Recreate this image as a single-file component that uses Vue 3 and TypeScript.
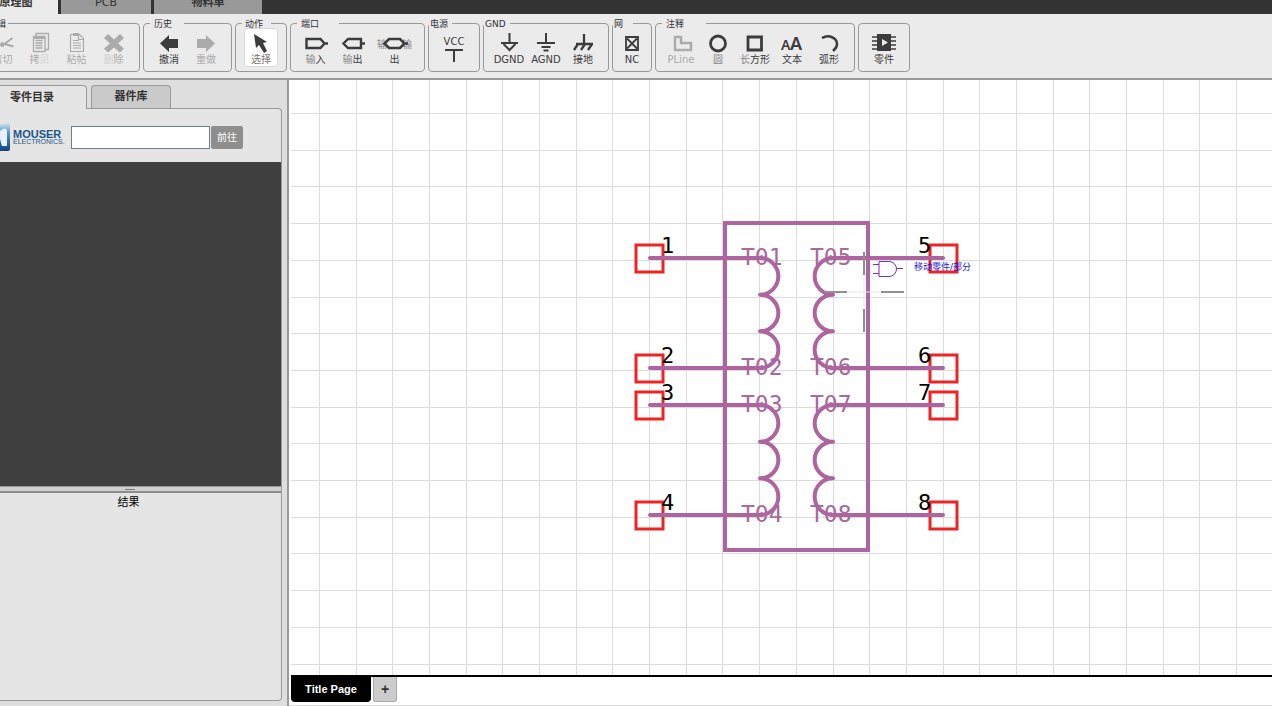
<script setup lang="ts">
import { ref } from 'vue'

interface Tool {
  id: string
  label: string
  soft?: string
  stroke?: string
  fill?: string
  width?: number
  disabled?: boolean
}
interface Group {
  id: string
  legend?: string
  tools: Tool[]
}

const groups: Group[] = [
  {
    id: 'edit',
    legend: '编辑',
    tools: [
      { id: 'cut', label: '剪切', disabled: true, width: 2, stroke: 'M11 14.500L22.500 6M11 11l12.500 3.500M9 12l5 2' },
      { id: 'copy', label: '拷', soft: '贝', disabled: true, width: 1.3, stroke: 'M9 4V1.500H21.500V17.500H18M8.500 8.500h7M8.500 11h7M8.500 13.500h7M8.500 16h7M6.500 4.500h11.500v15h-11.500z', fill: 'M6 4h12v3H6z' },
      { id: 'paste', label: '粘帖', disabled: true, width: 1.2, stroke: 'M6.500 2.500h9l4 4v13h-13zM9 8.500h6M9 11h8M9 13.500h8M9 16h8M14.500 3v4.500h4.500', fill: 'M9 1h6v3H9z' },
      { id: 'delete', label: '除', soft: '删', disabled: true, fill: 'M7 2l6 5.500L19 2l4 4-6 5.500 6 5-4 4-6-5-6 5-4-4 6-5L3 6z' },
    ],
  },
  {
    id: 'history',
    legend: '历史',
    tools: [
      { id: 'undo', label: '撤消', fill: 'M4 11.500L13 3v4h9v9h-9v4z' },
      { id: 'redo', label: '重做', disabled: true, fill: 'M22 11.500L13 3v4H4v9h9v4z' },
    ],
  },
  {
    id: 'action',
    legend: '动作',
    tools: [{ id: 'select', label: '选择', fill: 'M6 2l2 14 3-3 5 8 3-2-4-8 4-1z' }],
  },
  {
    id: 'port',
    legend: '端口',
    tools: [
      { id: 'input', label: '入', soft: '输', width: 2.4, stroke: 'M3.500 7h14l4 4.500-4 4.500h-14zM21.500 11.500H25' },
      { id: 'output', label: '出', soft: '输', width: 2.4, stroke: 'M21 7H8l-4.500 4.500L8 16h13zM21 11.500H25' },
      { id: 'inout', label: '出', width: 2.6, stroke: 'M7 7h11l4.500 4.500L18 16H7l-4.500-4.500zM22 11.500h4' },
    ],
  },
  {
    id: 'power',
    legend: '电源',
    tools: [{ id: 'vcc', label: 'VCC', stroke: 'M4 2h18M13 2v12' }],
  },
  {
    id: 'ground',
    legend: 'GND',
    tools: [
      { id: 'dgnd', label: 'DGND', stroke: 'M13.500 1v10M5 11h17M7.500 12l6 6 6-6' },
      { id: 'agnd', label: 'AGND', stroke: 'M13 1v10M4 11h18M8.500 15h9M10.500 18.500h5' },
      { id: 'chassis', label: '接地', width: 2.3, stroke: 'M14 2v10M6 12h17M8 12l-4 6M15 12l-4 6M22 12l-4 6' },
    ],
  },
  {
    id: 'net',
    legend: '网',
    tools: [{ id: 'nc', label: 'NC', width: 1.8, stroke: 'M7 5h12v13h-12zM8 6.500l10 10M18 6.500l-10 10' }],
  },
  {
    id: 'note',
    legend: '注释',
    tools: [
      { id: 'pline', label: 'PLine', disabled: true, width: 2.5, stroke: 'M7 5h6v6h10v7H7z' },
      { id: 'circle', label: '', soft: '圆', width: 2.8, stroke: 'M13 4a7.500 7.500 0 1 1 0 15a7.500 7.500 0 1 1 0-15z' },
      { id: 'rect', label: '方形', soft: '长', width: 2.8, stroke: 'M6 5h13.500v13H6z' },
      { id: 'text', label: '文本' },
      { id: 'arc', label: '弧形', width: 2.5, stroke: 'M6 6c7-4 15 0 15 6 0 3-1 4-4 7' },
    ],
  },
  {
    id: 'part',
    tools: [
      { id: 'part', label: '零件', width: 1.5, stroke: 'M1 5h5M1 9h5M1 13h5M1 17h5M20 5h5M20 9h5M20 13h5M20 17h5', fill: 'M6 2h14v17H6zM11 7v7l6-3.500z' },
    ],
  },
]

const gridX = Array.from({ length: 90 }, (_, i) => Math.round(28 + i * 36.68))
const gridY = Array.from({ length: 60 }, (_, i) => Math.round(33 + i * 36.7))

const rows = [178, 288, 325, 435]
const coils = [178, 325]
const bumps = (top: number, x: number, sweep: number) =>
  `M${x} ${top}` + [1, 2, 3].map((n) => `A18.300 18.300 0 0 ${sweep} ${x} ${top + (n * 110) / 3}`).join('')

const query = ref('')
</script>

<template>
  <div class="app">
    <nav class="modes">
      <button class="mode current">原理图</button>
      <button class="mode pcb">PCB</button>
      <button class="mode bom">物料单</button>
    </nav>

    <header class="toolbar">
      <fieldset v-for="g in groups" :key="g.id" class="group" :class="[g.id, { bare: !g.legend }]">
        <legend v-if="g.legend">{{ g.legend }}</legend>
        <div class="tools">
          <button v-for="t in g.tools" :key="t.id" class="tool" :class="t.id" :disabled="t.disabled">
            <span v-if="t.id === 'inout'" class="behind"><i>输</i><i>输</i></span>
            <svg class="icon" viewBox="0 0 26 22" aria-hidden="true">
              <path v-if="t.fill" :d="t.fill" fill="currentColor" fill-rule="evenodd" />
              <path v-if="t.stroke" :d="t.stroke" fill="none" stroke="currentColor" :stroke-width="t.width ?? 2" />
              <template v-if="t.id === 'text'">
                <text class="glyph small" x="2" y="18">A</text>
                <text class="glyph large" x="11" y="18">A</text>
              </template>
            </svg>
            <span class="label">
              <span v-if="t.soft && t.id !== 'copy'" class="soft">{{ t.soft }}</span>{{ t.label }}<span v-if="t.id === 'copy'" class="soft">{{ t.soft }}</span>
            </span>
          </button>
        </div>
      </fieldset>
    </header>

    <div class="body">
      <aside class="sidebar">
        <div class="tabs">
          <button class="tab active">零件目录</button>
          <button class="tab">器件库</button>
        </div>
        <div class="panel">
          <form class="search" @submit.prevent>
            <svg class="logo" viewBox="0 0 68 32" role="img" aria-label="Mouser Electronics">
              <defs>
                <linearGradient id="badge" x1="0" y1="0" x2="0" y2="1">
                  <stop offset="0" stop-color="#dfeaf2" />
                  <stop offset="0.400" stop-color="#4a93c4" />
                  <stop offset="1" stop-color="#0d4580" />
                </linearGradient>
              </defs>
              <path d="M0 3L10 0V27q0 2-2 2H0z" fill="url(#badge)" />
              <path d="M0 9L3 7Q7 5 7 10V24H2L0 17z" fill="#e6f2fa" />
              <text x="13" y="16" class="brand">MOUSER</text>
              <text x="13" y="22" class="sub">ELECTRONICS.</text>
            </svg>
            <input v-model="query" type="text" aria-label="搜索零件" />
            <button class="go">前往</button>
          </form>
          <div class="catalog"></div>
          <div class="splitter"><span></span></div>
          <div class="results">结果</div>
        </div>
      </aside>

      <main class="sheet">
        <svg class="canvas">
          <g class="grid">
            <line v-for="x in gridX" :key="'x' + x" :x1="x" y1="0" :x2="x" y2="100%" />
            <line v-for="y in gridY" :key="'y' + y" x1="0" :y1="y" x2="100%" :y2="y" />
          </g>
          <g v-for="(y, i) in rows" :key="y">
            <rect class="pin" x="345" :y="y - 13" width="27" height="27" />
            <rect class="pin" x="639" :y="y - 13" width="27" height="27" />
            <text class="num" x="370" :y="y - 5">{{ i + 1 }}</text>
            <text class="num" x="627" :y="y - 5">{{ i + 5 }}</text>
            <text class="name" x="450" :y="y + 7">T0{{ i + 1 }}</text>
            <text class="name" x="519" :y="y + 7">T0{{ i + 5 }}</text>
            <path class="wire" :d="`M359 ${y}H469M652 ${y}H541`" />
          </g>
          <rect class="outline" x="434" y="143" width="143" height="327" />
          <g v-for="y in coils" :key="'c' + y">
            <path class="wire" :d="bumps(y, 469, 1)" />
            <path class="wire" :d="bumps(y, 542, 0)" />
          </g>
          <path class="cross" d="M533 212h23M590 212h23M573 172v23M573 229v23" />
          <path class="gap" d="M557 212h32M573 196v32" />
          <path class="gate" d="M588 181.500h10a7 7 0 0 1 0 15h-10zM582 184.500h6M582 193.500h6M605 188.500h7" />
          <text class="hint" x="623" y="190">移动零件/部分</text>
        </svg>
        <footer class="pages">
          <button class="page">Title Page</button>
          <button class="add" aria-label="Add page">+</button>
        </footer>
      </main>
    </div>
  </div>
</template>

<style>
body {
  margin: 0;
}
</style>

<style scoped>
.app {
  display: flex;
  flex-direction: column;
  height: 100vh;
  overflow: hidden;
  background: #ebebeb;
  color: #333;
  font: 10px/12px 'DejaVu Sans', 'Noto Sans CJK SC', sans-serif;
}
.app * {
  box-sizing: border-box;
}
button,
input {
  font: inherit;
  color: inherit;
  border: 0;
  padding: 0;
  margin: 0;
  background: none;
}

/* Mode switcher */
.modes {
  display: flex;
  gap: 3px;
  flex: none;
  height: 14px;
  background: #333;
}
.mode {
  display: flex;
  align-items: flex-end;
  justify-content: center;
  overflow: hidden;
  height: 14px;
  background: #999;
  color: #333;
  font-size: 11px;
  line-height: 22px;
  font-weight: bold;
}
.mode.current {
  width: 84px;
  margin-left: -26px;
  background: #ebebeb;
}
.mode.pcb {
  width: 90px;
  font-weight: normal;
}
.mode.bom {
  width: 108px;
}

/* Toolbar */
.toolbar {
  display: flex;
  align-items: flex-start;
  gap: 3px;
  flex: none;
  height: 66px;
  padding-top: 4px;
  border-bottom: 2px solid #999;
}
.group {
  flex: none;
  min-width: 0;
  width: 52px;
  height: 54px;
  margin: 0;
  padding: 0;
  border: 1px solid #999;
  border-radius: 4px;
}
.group.bare {
  height: 49px;
  margin-top: 5px;
  padding-top: 4px;
}
.group.edit {
  width: 160px;
  margin-left: -20px;
}
.group.history {
  width: 89px;
}
.group.port {
  width: 135px;
}
.group.ground {
  width: 126px;
}
.group.net {
  width: 40px;
}
.group.note {
  width: 200px;
}
legend {
  height: 10px;
  margin-left: 6px;
  padding: 0 12px 0 4px;
  font-size: 9px;
  line-height: 12px;
}
.edit legend {
  margin-left: 7px;
  padding: 0 2px 0 0;
}
.action legend,
.port legend {
  padding: 0 8px 0 3px;
}
.port legend {
  padding-right: 20px;
  padding-left: 4px;
}
.power legend,
.ground legend,
.net legend {
  margin-left: 0;
  padding: 0 4px 0 1px;
}
.net legend {
  padding-right: 10px;
}
.note legend {
  padding-right: 22px;
}
.tools {
  display: flex;
  justify-content: center;
}
.edit .tools {
  justify-content: flex-end;
  padding-right: 7px;
}
.tool {
  position: relative;
  display: flex;
  flex: none;
  flex-direction: column;
  align-items: center;
  width: 37px;
  height: 39px;
  padding-top: 4px;
  color: #3c3c3c;
  white-space: nowrap;
}
.tool:disabled {
  color: #ababab;
}
.tool.select {
  width: 34px;
  border: 1px solid #d8d8d8;
  border-radius: 3px;
  padding-top: 3px;
  background: #fff;
}
.tool.select .label {
  color: #777;
}
.tool.inout {
  width: 47px;
}
.tool.vcc {
  padding-top: 8px;
}
.tool.vcc .label {
  order: -1;
}
.icon {
  position: relative;
  flex: none;
  width: 26px;
  height: 22px;
}
.glyph {
  fill: currentColor;
  font-family: 'Noto Sans', sans-serif;
  font-weight: 600;
}
.small {
  font-size: 14px;
}
.large {
  font-size: 18px;
}
.behind {
  position: absolute;
  top: 11px;
  left: 6px;
  right: 6px;
  display: flex;
  justify-content: space-between;
  color: #888;
}
.behind i {
  font-style: normal;
}
.soft {
  color: #888;
}
.tool:disabled .soft {
  color: #d0d0d0;
}

/* Sidebar */
.body {
  display: flex;
  flex: 1;
  min-height: 0;
}
.sidebar {
  display: flex;
  flex-direction: column;
  flex: none;
  width: 289px;
  padding: 5px 5px 5px 0;
  border-right: 2px solid #999;
  background: #dedede;
}
.tabs {
  display: flex;
  gap: 4px;
  height: 23px;
}
.tab {
  width: 80px;
  height: 23px;
  border: 1px solid #999;
  border-bottom: 0;
  border-radius: 4px 4px 0 0;
  background: #cacaca;
  font-size: 11px;
  font-weight: bold;
}
.tab.active {
  position: relative;
  width: 110px;
  height: 24px;
  margin-left: -23px;
  background: #e5e5e5;
}
.panel {
  display: flex;
  flex: 1;
  flex-direction: column;
  min-height: 0;
  border: 1px solid #999;
  border-left: 0;
  border-radius: 0 4px 4px 0;
  background: #e5e5e5;
}
.search {
  display: flex;
  align-items: center;
  flex: none;
  height: 53px;
  padding-top: 4px;
}
.logo {
  width: 68px;
  height: 32px;
  margin-right: 3px;
}
.brand,
.sub {
  font-family: 'Liberation Sans', sans-serif;
  font-weight: bold;
  fill: #1d5789;
}
.brand {
  font-size: 11px;
}
.sub {
  font-size: 7px;
  font-weight: normal;
}
.search input {
  width: 139px;
  height: 23px;
  padding: 0 4px;
  border: 1px solid #6d7f8f;
  background: #fff;
}
.go {
  width: 32px;
  height: 23px;
  margin-left: 1px;
  border-radius: 2px;
  background: #8e8e8e;
  color: #fff;
}
.catalog {
  flex: 328;
  background: #404040;
}
.splitter {
  display: flex;
  align-items: center;
  justify-content: center;
  flex: none;
  height: 7px;
  padding-right: 22px;
  border-top: 1px solid #999;
  border-bottom: 2px solid #8c8c8c;
  background: #d0d0d0;
}
.splitter span {
  width: 10px;
  height: 1px;
  background: #777;
}
.results {
  flex: 205;
  padding: 4px 24px 0 0;
  color: #000;
  font-size: 11px;
  text-align: center;
}

/* Drawing sheet */
.sheet {
  display: flex;
  flex: 1;
  flex-direction: column;
  min-width: 0;
  padding-left: 2px;
  border-bottom: 1px solid #dcdad0;
  background: #fff;
}
.canvas {
  flex: 1;
  width: 100%;
  min-height: 0;
}
.grid line {
  stroke: #dcdcdc;
  stroke-width: 1;
  shape-rendering: crispEdges;
}
.pin {
  fill: none;
  stroke: #ee2424;
  stroke-width: 3;
}
.wire,
.outline {
  fill: none;
  stroke: #ad649f;
  stroke-width: 4;
}
.wire {
  stroke-linecap: round;
  stroke-linejoin: round;
}
.num,
.name {
  font-family: 'DejaVu Sans Mono', monospace;
  font-size: 22px;
  fill: #000;
}
.name {
  font-size: 23px;
  fill: #a8699c;
}
.cross {
  stroke: #909090;
  stroke-width: 2;
}
.gap {
  stroke: #e8e8e8;
  stroke-width: 1;
}
.gate {
  fill: none;
  stroke: #7330cc;
  stroke-width: 1;
}
.hint {
  fill: #2020e0;
  font-size: 9px;
}
.pages {
  display: flex;
  gap: 2px;
  flex: none;
  height: 30px;
  border-top: 2px solid #000;
  font-family: 'Liberation Sans', sans-serif;
  font-size: 11px;
  font-weight: bold;
}
.page {
  width: 80px;
  height: 25px;
  padding-bottom: 1px;
  border-radius: 0 0 4px 4px;
  background: #000;
  color: #fff;
}
.add {
  width: 24px;
  height: 25px;
  border: 1px solid #aaa;
  border-top: 0;
  border-radius: 0 0 3px 3px;
  background: #ccc;
  font-size: 14px;
}
</style>
